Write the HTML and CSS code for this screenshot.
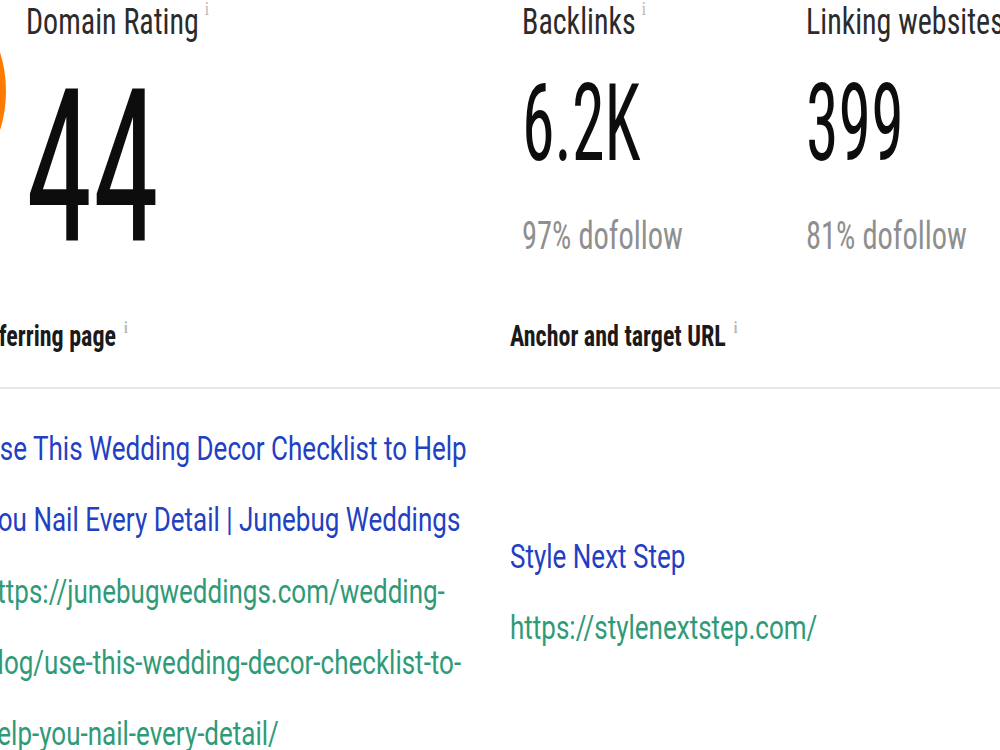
FILE: index.html
```html
<!DOCTYPE html>
<html lang="en">
    <head>
        <meta charset="UTF-8" />
        <meta name="viewport" content="width=device-width, initial-scale=1.0" />
        <title>Backlink profile</title>

        <link rel="stylesheet" href="styles.css">
    </head>
    <body>
        <div class="page">
            <section class="overview">
                <div class="dr_block">
                    <div class="dr_gauge"></div>
                    <div class="stat">
                        <div class="stat_label">Domain Rating<span class="info">i</span></div>
                        <div class="dr_value">44</div>
                    </div>
                </div>
                <div class="stat backlinks">
                    <div class="stat_label">Backlinks<span class="info">i</span></div>
                    <div class="stat_value">6.2K</div>
                    <div class="stat_sub">97% dofollow</div>
                </div>
                <div class="stat">
                    <div class="stat_label">Linking websites</div>
                    <div class="stat_value">399</div>
                    <div class="stat_sub">81% dofollow</div>
                </div>
            </section>

            <table class="links_table">
                <thead>
                    <tr>
                        <th class="col_page">Referring page<span class="info">i</span></th>
                        <th class="col_anchor">Anchor and target URL<span class="info">i</span></th>
                    </tr>
                </thead>
                <tbody>
                    <tr>
                        <td class="col_page">
                            <a class="link_title" href="#">Use This Wedding Decor Checklist to Help You Nail Every Detail | Junebug Weddings</a>
                            <a class="link_url" href="#">https://junebugweddings.com/wedding-blog/use-this-wedding-decor-checklist-to-help-you-nail-every-detail/</a>
                        </td>
                        <td class="col_anchor">
                            <a class="link_title" href="#">Style Next Step</a>
                            <a class="link_url" href="#">https://stylenextstep.com/</a>
                        </td>
                    </tr>
                </tbody>
            </table>
        </div>
    </body>
</html>
```

FILE: styles.css
```css
html {
    overflow: hidden;
}

body {
    margin: 0;
    min-height: 750px;
    background-color: #ffffff;
}

/* the whole report is drawn a bit taller than it is wide */
.page {
    width: 1000px;
    height: 600px;
    transform: scaleY(1.25);
    transform-origin: 0 0;
}

.overview {
    display: flex;
    align-items: flex-start;
    height: 211px;
}

.dr_block {
    flex: none;
    display: flex;
    align-items: flex-start;
    width: 522px;
}

.dr_gauge {
    flex: none;
    width: 146px;
    height: 146px;
    margin-top: -12px;
    margin-left: -164px;
    margin-right: 20px;
    border: 12px solid #ff7a00;
    border-radius: 50%;
}

.stat {
    flex: none;
    display: flex;
    flex-direction: column;
    align-items: flex-start;
}

.backlinks {
    width: 284px;
}

.stat_label {
    font-family: "Roboto Condensed", "Liberation Sans Narrow", sans-serif;
    font-size: 30px;
    line-height: 34px;
    color: #2b2b2b;
    white-space: nowrap;
}

.info {
    display: inline-block;
    margin-left: 6px;
    text-indent: 0;
    font-family: "Liberation Serif", serif;
    font-size: 15px;
    line-height: 15px;
    vertical-align: top;
    color: #b5b5b5;
}

.dr_value {
    margin-top: 19px;
    font-family: "Roboto Condensed", "Liberation Sans Narrow", sans-serif;
    font-size: 135px;
    line-height: 1;
    color: #0d0d0d;
    transform: scaleY(1.27);
    transform-origin: 0 17px;
}

.stat_value {
    margin-top: 25px;
    font-family: "Roboto Condensed", "Liberation Sans Narrow", sans-serif;
    font-size: 66px;
    line-height: 1;
    color: #0d0d0d;
    transform: scaleY(1.31);
    transform-origin: 0 9px;
}

.stat_sub {
    margin-top: 44px;
    font-family: "Roboto Condensed", "Liberation Sans Narrow", sans-serif;
    font-size: 30.5px;
    line-height: 40px;
    color: #8f8f8f;
}

.links_table {
    width: 1040px;
    margin-left: -17px;
    border-collapse: collapse;
}

.links_table th {
    padding: 43px 0 26px 0;
    font-family: "Roboto Condensed", "Liberation Sans Narrow", sans-serif;
    font-size: 24px;
    font-weight: bold;
    line-height: 30px;
    text-align: left;
    color: #1a1a1a;
    border-bottom: 1.6px solid #e3e3e3;
}

.links_table th.col_page {
    text-indent: -9px;
}

.links_table th .info {
    font-size: 13px;
    margin-left: 8px;
}

.links_table td {
    padding: 20px 0 0 0;
    vertical-align: middle;
    font-family: Roboto, "Liberation Sans", sans-serif;
    font-size: 26px;
    line-height: 57px;
}

.col_page {
    width: 507px;
}

.links_table td.col_page {
    padding-right: 20px;
}

.link_title,
.link_url {
    display: block;
    text-decoration: none;
}

.link_title {
    color: #2240c2;
}

.link_url {
    color: #2f9a78;
}
```
